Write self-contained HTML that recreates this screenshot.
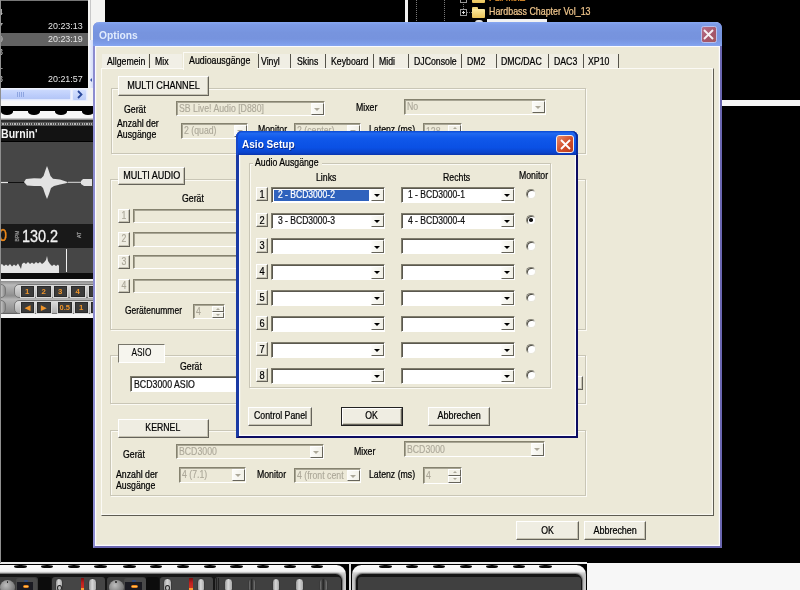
<!DOCTYPE html>
<html><head><meta charset="utf-8"><title>Options</title>
<style>
html,body{margin:0;padding:0}
html{width:800px;height:590px;overflow:hidden;background:#000}
body{width:800px;height:590px;position:relative;overflow:hidden;background:#000;font-family:"Liberation Sans",sans-serif;font-size:10.4px;color:#000}
div,span{position:absolute;box-sizing:border-box;white-space:nowrap}
.t{line-height:10px;height:10px;color:#000;-webkit-text-stroke-width:0.24px;transform:scaleX(0.84);transform-origin:0 50%}
.g{color:#aca899;-webkit-text-stroke-width:0.15px}
.btn{background:#efede2;border-top:1px solid #fff;border-left:1px solid #fff;border-right:1.4px solid #65635a;border-bottom:1.4px solid #65635a;box-shadow:inset -1px -1px 0 #c5c2b2;text-align:center}
.btn span{position:static;display:inline-block;-webkit-text-stroke-width:0.24px;transform:scaleX(0.84)}
.btn span.g{-webkit-text-stroke-width:0.15px}
.sunk{border-top:1px solid #7f7c6c;border-left:1px solid #7f7c6c;border-right:1px solid #fff;border-bottom:1px solid #fff;box-shadow:inset 1px 1px 0 #5a584e}
.sunkd{border-top:1px solid #85826f;border-left:1px solid #85826f;border-right:1px solid #fff;border-bottom:1px solid #fff;box-shadow:inset 1px 1px 0 #a8a594}
.grp{border:1px solid #c9c6b6;box-shadow:1px 1px 0 #fbfaf4, inset 1px 1px 0 #fbfaf4}
.dd{background:linear-gradient(90deg,#fbfbf8,#f1f0e7);border-top:1px solid #fff;border-left:1px solid #fdfdfb;border-right:1px solid #66645a;border-bottom:1px solid #66645a}
.dd:after{content:"";position:absolute;left:2.2px;top:4.3px;border-left:3.6px solid transparent;border-right:3.6px solid transparent;border-top:3.8px solid #000}
.ddd:after{border-top-color:#aca899}
.sep{width:1px;background:#55534a;top:54px;height:14px}
.rad{width:9.5px;height:9.5px;border-radius:50%;background:#fff;border:1px solid #8a887c;border-right-color:#e8e6da;border-bottom-color:#e8e6da;box-shadow:inset 1px 1px 0 #55534a}
</style></head><body><div style="left:0;top:0;width:800px;height:590px;overflow:hidden"><div id="w" style="left:-10px;top:-10px;width:820px;height:610px;background:#000;filter:blur(0.45px)"><div style="left:10px;top:10px;width:800px;height:590px">

<!-- background application -->
<div style="left:0;top:0;width:88px;height:88px;background:#000"></div>
<div style="left:0;top:0;width:88px;height:1px;background:#777"></div>
<div style="left:0;top:0;width:1px;height:563px;background:#8f8f8f;z-index:2"></div>
<div style="left:0;top:33px;width:88px;height:13px;background:#626262"></div>
<div class="t" style="left:-2.3px;top:7px;color:#c4c4c4;font-size:9.5px;transform:none;-webkit-text-stroke:0">4</div>
<div class="t" style="left:-2.3px;top:20.5px;color:#c4c4c4;font-size:9.5px;transform:none;-webkit-text-stroke:0">7</div>
<div class="t" style="left:47.5px;top:20.5px;color:#e4e4e4;font-size:9.7px;-webkit-text-stroke:0;transform:scaleX(0.92)">20:23:13</div>
<div class="t" style="left:-2.3px;top:34px;color:#c4c4c4;font-size:9.5px;transform:none;-webkit-text-stroke:0">9</div>
<div class="t" style="left:47.5px;top:34px;color:#e4e4e4;font-size:9.7px;-webkit-text-stroke:0;transform:scaleX(0.92)">20:23:19</div>
<div class="t" style="left:-2.3px;top:47px;color:#c4c4c4;font-size:9.5px;transform:none;-webkit-text-stroke:0">3</div>
<div class="t" style="left:-2.3px;top:60.5px;color:#c4c4c4;font-size:9.5px;transform:none;-webkit-text-stroke:0">1</div>
<div class="t" style="left:-2.3px;top:74px;color:#c4c4c4;font-size:9.5px;transform:none;-webkit-text-stroke:0">3</div>
<div class="t" style="left:47.5px;top:74px;color:#e4e4e4;font-size:9.7px;-webkit-text-stroke:0;transform:scaleX(0.92)">20:21:57</div>
<div style="left:88px;top:0;width:17px;height:30px;background:#f4f4f2"></div>
<div style="left:88px;top:0;width:6px;height:121px;background:#f4f4f2"></div>
<div style="left:90px;top:0;width:1px;height:88px;background:#c8c8c8"></div>
<div style="left:88.5px;top:40px;width:5px;height:48px;background:linear-gradient(90deg,#f0f2fb,#cdd8f8)"></div>
<div style="left:90.3px;top:77.5px;width:0;height:0;border-top:2px solid transparent;border-bottom:2px solid transparent;border-right:2.4px solid #3a55a8"></div>
<div style="left:0;top:88px;width:88px;height:13px;background:#eef1fb"></div>
<div style="left:0;top:89px;width:71px;height:11px;background:linear-gradient(#cbd9fd,#bccdfb 60%,#b4c6f6);border-radius:0 2px 2px 0;border:1px solid #dfe7fd;border-left:0"></div>
<div style="left:17px;top:92px;width:1px;height:5px;background:#8ea5e0"></div>
<div style="left:19px;top:92px;width:1px;height:5px;background:#8ea5e0"></div>
<div style="left:21px;top:92px;width:1px;height:5px;background:#8ea5e0"></div>
<div style="left:23px;top:92px;width:1px;height:5px;background:#8ea5e0"></div>
<div style="left:72px;top:89px;width:15px;height:12px;background:linear-gradient(#d4e0fe,#bccdf8);border-radius:2px;border:1px solid #e6ecfd"></div>
<svg style="position:absolute;left:76px;top:90px" width="8" height="9" viewBox="0 0 8 9"><path d="M2 1 L5.5 4.5 L2 8" fill="none" stroke="#2b4a9c" stroke-width="1.8"/></svg>
<div style="left:0;top:101px;width:93px;height:19px;background:#f6f6f6"></div>
<div style="left:0;top:106px;width:93px;height:5.2px;background:#000"></div>
<div style="left:1.2000000000000002px;top:108.2px;width:11.6px;height:6.4px;background:#000;border-radius:50%"></div>
<div style="left:28.2px;top:108.2px;width:11.6px;height:6.4px;background:#000;border-radius:50%"></div>
<div style="left:55.2px;top:108.2px;width:11.6px;height:6.4px;background:#000;border-radius:50%"></div>
<div style="left:82.2px;top:108.2px;width:11.6px;height:6.4px;background:#000;border-radius:50%"></div>
<div style="left:0;top:117.5px;width:93px;height:2.5px;background:linear-gradient(#e4e4e4,#777)"></div>
<div style="left:0;top:120px;width:93px;height:162px;background:#464646"></div>
<div style="left:0;top:119.6px;width:93px;height:2.4px;background:#2c2c2c"></div>
<div style="left:0;top:122px;width:93px;height:4px;background:#555"></div>
<div style="left:0;top:122.6px;width:93px;height:2.8px;background:repeating-linear-gradient(90deg,#b4b4b4 0 1.2px,#505050 1.2px 2.4px)"></div>
<div style="left:0;top:126px;width:93px;height:16px;background:#131313"></div>
<div class="t" style="left:0.5px;top:128px;line-height:13px;height:13px;color:#f4f4f4;font-weight:bold;font-size:12px;transform:scaleX(0.88);transform-origin:0 0;-webkit-text-stroke:0">Burnin'</div>
<div style="left:0;top:141px;width:93px;height:1px;background:#000"></div>
<svg style="position:absolute;left:0;top:160px" width="93" height="46" viewBox="0 160 93 46">
<path d="M0 182.5 H24" stroke="#111" stroke-width="1"/>
<path d="M0 182.5 H8" stroke="#e6e6e6" stroke-width="1.2"/>
<path d="M24 182 L26 179 L34 178.3 L41 178.5 L43.5 176 L45.5 170 L47 166 L48.5 170 L50.5 176 L53 178.8 L60 179.5 L66 181.5 L68 182.3 L66 183.2 L60 184.5 L54 186 L51 188 L49 194 L47 199 L45 194 L43 188 L41 186 L34 186 L27 185.5 Z" fill="#e2e2e2"/>
<path d="M68 182.3 H81" stroke="#dcdcdc" stroke-width="1"/>
<path d="M81 181 L83 179 L92 179 L92 186 L84 186 L81 184 Z" fill="#e2e2e2"/>
</svg>
<div style="left:0;top:224px;width:93px;height:24px;background:#191919"></div>
<div class="t" style="left:-1.5px;top:226px;line-height:20px;height:20px;color:#f08a1a;font-size:17px;-webkit-text-stroke:0.4px #f08a1a">0</div>
<div class="t" style="left:21.5px;top:226px;line-height:20px;height:20px;color:#f2f2f2;font-size:17.2px;letter-spacing:0;-webkit-text-stroke:0.3px #f2f2f2">130.2</div>
<div class="t" style="left:10px;top:231px;font-size:5px;color:#999;transform:rotate(-90deg);transform-origin:center;width:14px;text-align:center">BPM</div>
<div class="t" style="left:72px;top:230px;font-size:5px;color:#999;transform:rotate(-90deg);transform-origin:center;width:14px;text-align:center">AT</div>
<svg style="position:absolute;left:0;top:248px" width="93" height="26" viewBox="0 248 93 26">
<path d="M0 273 V265 L2 264 L4 266 L6 264.5 L8 266 L10 264 L12 266.5 L14 264.5 L16 266 L18 263.5 L20 267 L21 269 L22 264 L24 262.5 L26 264 L28 262 L30 264 L32 262.5 L34 264 L36 262 L38 263.5 L40 262 L42 264 L44 262.5 L46 260 L47 256 L48 261 L50 264 L52 266 L54 264.5 L56 266 L58 264.5 L59 266 V273 Z" fill="#e4e4e4"/>
<path d="M66.5 249 V272" stroke="#f0f0f0" stroke-width="1"/>
</svg>
<div style="left:0;top:273px;width:93px;height:6px;background:#0c0c0c"></div>
<div style="left:0;top:279px;width:93px;height:2px;background:#f0f0f0"></div>
<div style="left:0;top:281px;width:93px;height:33px;background:linear-gradient(#8d8d8d,#b9b9b9 12%,#8e8e8e 45%,#b5b5b5 55%,#8a8a8a 95%,#555)"></div>
<div style="left:-6px;top:283.5px;width:12px;height:14px;background:linear-gradient(90deg,#e9e9e9,#c0c0c0 60%,#8a8a8a);border-radius:5px;border:1px solid #777"></div>
<div style="left:-6px;top:299.5px;width:12px;height:14px;background:linear-gradient(90deg,#e9e9e9,#c0c0c0 60%,#8a8a8a);border-radius:5px;border:1px solid #777"></div>
<div style="left:14px;top:283.5px;width:82px;height:14px;background:linear-gradient(#dedede,#b0b0b0);border-radius:5px 0 0 5px;border:1px solid #777"></div>
<div style="left:14px;top:299.5px;width:82px;height:14px;background:linear-gradient(#dedede,#b0b0b0);border-radius:5px 0 0 5px;border:1px solid #777"></div>
<div style="left:20.5px;top:285.5px;width:13.5px;height:11px;background:#3b3b3b;border:1px solid #2a2a2a;box-shadow:0 0 0 1px #d8d8d8;color:#f0952a;font-weight:bold;font-size:7.8px;line-height:9px;text-align:center">1</div>
<div style="left:37px;top:285.5px;width:13.5px;height:11px;background:#3b3b3b;border:1px solid #2a2a2a;box-shadow:0 0 0 1px #d8d8d8;color:#f0952a;font-weight:bold;font-size:7.8px;line-height:9px;text-align:center">2</div>
<div style="left:53.5px;top:285.5px;width:13.5px;height:11px;background:#3b3b3b;border:1px solid #2a2a2a;box-shadow:0 0 0 1px #d8d8d8;color:#f0952a;font-weight:bold;font-size:7.8px;line-height:9px;text-align:center">3</div>
<div style="left:71px;top:285.5px;width:13.5px;height:11px;background:#3b3b3b;border:1px solid #2a2a2a;box-shadow:0 0 0 1px #d8d8d8;color:#f0952a;font-weight:bold;font-size:7.8px;line-height:9px;text-align:center">4</div>
<div style="left:88.5px;top:285.5px;width:8px;height:11px;background:#3b3b3b;border:1px solid #2a2a2a;box-shadow:0 0 0 1px #d8d8d8;color:#f0952a;font-weight:bold;font-size:7.8px;line-height:9px;text-align:center"></div>
<div style="left:20.5px;top:301.5px;width:13.5px;height:11px;background:#3b3b3b;border:1px solid #2a2a2a;box-shadow:0 0 0 1px #d8d8d8;color:#f0952a;font-weight:bold;font-size:6.5px;line-height:9px;text-align:center">&#9664;</div>
<div style="left:37px;top:301.5px;width:13.5px;height:11px;background:#3b3b3b;border:1px solid #2a2a2a;box-shadow:0 0 0 1px #d8d8d8;color:#f0952a;font-weight:bold;font-size:6.5px;line-height:9px;text-align:center">&#9654;</div>
<div style="left:58px;top:301.5px;width:13.5px;height:11px;background:#3b3b3b;border:1px solid #2a2a2a;box-shadow:0 0 0 1px #d8d8d8;color:#f0952a;font-weight:bold;font-size:7.5px;line-height:9px;text-align:center">0.5</div>
<div style="left:74.5px;top:301.5px;width:13.5px;height:11px;background:#3b3b3b;border:1px solid #2a2a2a;box-shadow:0 0 0 1px #d8d8d8;color:#f0952a;font-weight:bold;font-size:7.8px;line-height:9px;text-align:center">1</div>
<div style="left:90.5px;top:301.5px;width:6px;height:11px;background:#3b3b3b;border:1px solid #2a2a2a;box-shadow:0 0 0 1px #d8d8d8;color:#f0952a;font-weight:bold;font-size:7.8px;line-height:9px;text-align:center"></div>
<div style="left:0;top:314px;width:93px;height:4px;background:#f4f4f4"></div>
<div style="left:405px;top:0;width:3px;height:23px;background:#f2f2f2"></div>
<div style="left:416px;top:0;width:1px;height:23px;background:repeating-linear-gradient(#777 0 1px,#000 1px 2px)"></div>
<div style="left:444px;top:0;width:1px;height:23px;background:repeating-linear-gradient(#777 0 1px,#000 1px 2px)"></div>
<div style="left:463px;top:0;width:1px;height:12px;background:repeating-linear-gradient(#777 0 1px,#000 1px 2px)"></div>
<div style="left:460px;top:9px;width:7px;height:7px;border:1px solid #999;background:#000"></div>
<div style="left:462px;top:12px;width:3px;height:1px;background:#ddd"></div><div style="left:463px;top:11px;width:1px;height:3px;background:#ddd"></div>
<div style="left:460px;top:-4px;width:7px;height:7px;border:1px solid #999;background:#000"></div>
<div style="left:467px;top:12px;width:5px;height:1px;background:repeating-linear-gradient(90deg,#777 0 1px,#000 1px 2px)"></div>
<div style="left:472px;top:7px;width:6px;height:3px;background:#f3d77a;border-radius:1px 1px 0 0"></div>
<div style="left:472px;top:9px;width:13px;height:9px;background:linear-gradient(#fbe9a0,#e9c257);border-radius:1px"></div>
<div style="left:472px;top:-6px;width:13px;height:9px;background:linear-gradient(#fbe9a0,#e9c257);border-radius:1px"></div>
<div class="t" style="left:489.3px;top:6px;color:#f0c68c;font-size:10.2px;line-height:11px;height:11px;transform:scaleX(0.87)">Hardbass Chapter Vol_13</div>
<div class="t" style="left:489.3px;top:-8.3px;color:#f09a30;font-size:10.2px;line-height:11px;height:11px;transform:scaleX(0.87)">Full MixE</div>
<div style="left:475px;top:20px;width:8px;height:3px;background:#ddd;border-radius:3px 3px 0 0"></div>
<div style="left:487px;top:19px;width:60px;height:4px;background:#f2f2f2"></div>
<div style="left:721px;top:100px;width:79px;height:6px;background:#f6f6f6"></div>
<!-- bottom strip -->
<div style="left:0;top:562px;width:587px;height:2px;background:#ececec"></div>
<div style="left:586.8px;top:563.2px;width:214px;height:28px;background:#f7f7f7"></div>
<div style="left:-10px;top:565.2px;width:356px;height:30px;background:linear-gradient(#fcfcfc,#f4f4f4 6.3px,#d4d4d4 8px,#c4c4c4 10px,#d0d0d0);border-radius:0px 9.5px 0 0"></div>
<div style="left:-6.4px;top:574px;width:348.8px;height:30px;background:#161616;border-radius:0px 6.5px 0 0;box-shadow:0 0 1.5px 0.5px #666"></div>
<div style="left:352px;top:565.2px;width:233.8px;height:30px;background:linear-gradient(#fcfcfc,#f4f4f4 6.3px,#d4d4d4 8px,#c4c4c4 10px,#d0d0d0);border-radius:9.5px 9.5px 0 0"></div>
<div style="left:355.6px;top:574px;width:226.60000000000002px;height:30px;background:#161616;border-radius:6.5px 6.5px 0 0;box-shadow:0 0 1.5px 0.5px #666"></div>
<div style="left:349.2px;top:563px;width:1.7px;height:27px;background:#dcdcdc"></div>
<div style="left:14.3px;top:564.9px;width:12.4px;height:3.4px;background:#0a0a0a;border-radius:50%"></div>
<div style="left:40.8px;top:564.9px;width:12.4px;height:3.4px;background:#0a0a0a;border-radius:50%"></div>
<div style="left:67.5px;top:564.9px;width:12.4px;height:3.4px;background:#0a0a0a;border-radius:50%"></div>
<div style="left:94.3px;top:564.9px;width:12.4px;height:3.4px;background:#0a0a0a;border-radius:50%"></div>
<div style="left:123.3px;top:564.9px;width:12.4px;height:3.4px;background:#0a0a0a;border-radius:50%"></div>
<div style="left:150.1px;top:564.9px;width:12.4px;height:3.4px;background:#0a0a0a;border-radius:50%"></div>
<div style="left:176.8px;top:564.9px;width:12.4px;height:3.4px;background:#0a0a0a;border-radius:50%"></div>
<div style="left:203.8px;top:564.9px;width:12.4px;height:3.4px;background:#0a0a0a;border-radius:50%"></div>
<div style="left:230.2px;top:564.9px;width:12.4px;height:3.4px;background:#0a0a0a;border-radius:50%"></div>
<div style="left:256.8px;top:564.9px;width:12.4px;height:3.4px;background:#0a0a0a;border-radius:50%"></div>
<div style="left:283.8px;top:564.9px;width:12.4px;height:3.4px;background:#0a0a0a;border-radius:50%"></div>
<div style="left:310.6px;top:564.9px;width:12.4px;height:3.4px;background:#0a0a0a;border-radius:50%"></div>
<div style="left:379.3px;top:564.9px;width:12.4px;height:3.4px;background:#0a0a0a;border-radius:50%"></div>
<div style="left:406.1px;top:564.9px;width:12.4px;height:3.4px;background:#0a0a0a;border-radius:50%"></div>
<div style="left:432.8px;top:564.9px;width:12.4px;height:3.4px;background:#0a0a0a;border-radius:50%"></div>
<div style="left:459.6px;top:564.9px;width:12.4px;height:3.4px;background:#0a0a0a;border-radius:50%"></div>
<div style="left:486.1px;top:564.9px;width:12.4px;height:3.4px;background:#0a0a0a;border-radius:50%"></div>
<div style="left:512.8px;top:564.9px;width:12.4px;height:3.4px;background:#0a0a0a;border-radius:50%"></div>
<div style="left:539.3px;top:564.9px;width:12.4px;height:3.4px;background:#0a0a0a;border-radius:50%"></div>
<div style="left:-3px;top:576.8px;width:40.5px;height:15px;background:#3d3d3d;border-radius:3px 3px 0 0"></div>
<div style="left:37.5px;top:576.8px;width:13.5px;height:15px;background:#0c0c0c;border-radius:3px 3px 0 0"></div>
<div style="left:51.5px;top:576.8px;width:53px;height:15px;background:#454545;border-radius:3px 3px 0 0"></div>
<div style="left:106.5px;top:576.8px;width:39px;height:15px;background:#3d3d3d;border-radius:3px 3px 0 0"></div>
<div style="left:145.5px;top:576.8px;width:13.5px;height:15px;background:#0c0c0c;border-radius:3px 3px 0 0"></div>
<div style="left:159.5px;top:576.8px;width:53px;height:15px;background:#454545;border-radius:3px 3px 0 0"></div>
<div style="left:214.5px;top:576.8px;width:126px;height:15px;background:#404040;border-radius:3px 3px 0 0"></div>
<div style="left:357.5px;top:576.8px;width:223px;height:15px;background:#404040;border-radius:3px 3px 0 0"></div>
<div style="left:0.0px;top:579.5px;width:15px;height:15px;border-radius:50%;background:radial-gradient(circle at 40% 35%,#bdbdbd,#7a7a7a 65%,#444)"></div>
<div style="left:6.7px;top:581px;width:1.8px;height:2.4px;background:#222;border-radius:1px"></div>
<div style="left:15.7px;top:578px;width:21.5px;height:13px;background:#4a4a4a;border-radius:3px 3px 0 0"></div>
<div style="left:16.5px;top:582px;width:16.5px;height:9px;background:#1b1b22"></div>
<div style="left:23.5px;top:579.5px;width:4px;height:2px;background:#2f4a80;border-radius:1px"></div>
<div style="left:22.5px;top:584.5px;width:6.5px;height:3.6px;background:#ffc050;border:1px solid #f08018;border-radius:1.5px"></div>
<div style="left:54.8px;top:577.5px;width:8.4px;height:15px;border-radius:4.2px;background:linear-gradient(90deg,#999,#d8d8d8 45%,#aaa);border:1px solid #3a3a3a"></div>
<div style="left:56.5px;top:585px;width:5px;height:6px;border-radius:50%;border:1px solid #222;background:#bbb"></div>
<div style="left:80.5px;top:577.5px;width:3.5px;height:10px;background:linear-gradient(#7a1010,#c02020 50%,#d03020)"></div>
<div style="left:80.5px;top:587.5px;width:3.5px;height:3px;background:#ff9a30"></div>
<div style="left:88.3px;top:577.5px;width:8.4px;height:15px;border-radius:4.2px;background:linear-gradient(90deg,#999,#d8d8d8 45%,#aaa);border:1px solid #3a3a3a"></div>
<div style="left:108.5px;top:579.5px;width:15px;height:15px;border-radius:50%;background:radial-gradient(circle at 40% 35%,#bdbdbd,#7a7a7a 65%,#444)"></div>
<div style="left:115.2px;top:581px;width:1.8px;height:2.4px;background:#222;border-radius:1px"></div>
<div style="left:124.2px;top:578px;width:21.5px;height:13px;background:#4a4a4a;border-radius:3px 3px 0 0"></div>
<div style="left:125.0px;top:582px;width:16.5px;height:9px;background:#1b1b22"></div>
<div style="left:132.0px;top:579.5px;width:4px;height:2px;background:#2f4a80;border-radius:1px"></div>
<div style="left:131.0px;top:584.5px;width:6.5px;height:3.6px;background:#ffc050;border:1px solid #f08018;border-radius:1.5px"></div>
<div style="left:163.3px;top:577.5px;width:8.4px;height:15px;border-radius:4.2px;background:linear-gradient(90deg,#999,#d8d8d8 45%,#aaa);border:1px solid #3a3a3a"></div>
<div style="left:165.0px;top:585px;width:5px;height:6px;border-radius:50%;border:1px solid #222;background:#bbb"></div>
<div style="left:189.0px;top:577.5px;width:3.5px;height:10px;background:linear-gradient(#7a1010,#c02020 50%,#d03020)"></div>
<div style="left:189.0px;top:587.5px;width:3.5px;height:3px;background:#ff9a30"></div>
<div style="left:196.8px;top:577.5px;width:8.4px;height:15px;border-radius:4.2px;background:linear-gradient(90deg,#999,#d8d8d8 45%,#aaa);border:1px solid #3a3a3a"></div>
<div style="left:215.5px;top:578px;width:1px;height:12px;background:#222"></div><div style="left:217.5px;top:578px;width:1px;height:12px;background:#222"></div>
<div style="left:224.3px;top:577.5px;width:8.4px;height:15px;border-radius:4.2px;background:linear-gradient(90deg,#999,#d8d8d8 45%,#aaa);border:1px solid #3a3a3a"></div>
<div style="left:247.8px;top:577.5px;width:8.4px;height:15px;border-radius:4.2px;background:linear-gradient(90deg,#777,#222 45%,#777);border:1px solid #3a3a3a"></div>
<div style="left:271.8px;top:577.5px;width:8.4px;height:15px;border-radius:4.2px;background:linear-gradient(90deg,#999,#d8d8d8 45%,#aaa);border:1px solid #3a3a3a"></div>
<div style="left:295.3px;top:577.5px;width:8.4px;height:15px;border-radius:4.2px;background:linear-gradient(90deg,#999,#d8d8d8 45%,#aaa);border:1px solid #3a3a3a"></div>
<div style="left:319.3px;top:577.5px;width:8.4px;height:15px;border-radius:4.2px;background:linear-gradient(90deg,#777,#222 45%,#777);border:1px solid #3a3a3a"></div>
<!-- Options window -->
<div style="left:92.5px;top:22px;width:629.3px;height:526px;background:#ece9d8;border-radius:6px 6px 0 0;border:2.4px solid #6a66b0;border-left-color:#8c8cd0;border-top:0;box-shadow:inset 0 0 0 1.2px #fbfbff;overflow:hidden">
</div>
<div style="left:92.5px;top:22px;width:629.3px;height:23.5px;background:linear-gradient(#88a8f2,#7c9ae6 12%,#7794de 45%,#7693de 70%,#7e9dea 90%,#86a6f0);border-radius:6px 6px 0 0"></div>
<div style="left:95px;top:45.5px;width:624.5px;height:1.2px;background:#fbfbff"></div>
<div class="t" style="left:98.5px;top:28.2px;line-height:13px;height:13px;color:#e0ebfd;font-weight:bold;font-size:11.6px;transform:scaleX(0.885);transform-origin:0 0;-webkit-text-stroke:0">Options</div>
<div style="left:700.5px;top:26px;width:16.5px;height:16.5px;background:linear-gradient(135deg,#b8708a,#a5566a 60%,#a35a60);border:1px solid #b9c0ee;border-radius:2.5px"></div>
<svg style="position:absolute;left:703.2px;top:28.8px" width="11" height="11" viewBox="0 0 11 11"><path d="M1 1 L10 10 M10 1 L1 10" stroke="#f6f0f4" stroke-width="1.9"/></svg>
<div style="left:101px;top:68px;width:613px;height:448px;border-left:1px solid #fbfaf5;border-top:1px solid #fbfaf5;border-right:1.3px solid #5e5c52;border-bottom:1.3px solid #5e5c52;box-shadow:inset -1.2px -1.2px 0 #f8f7ef"></div>
<div style="left:102px;top:54px;width:46px;height:14px;background:#f1efe6"></div>
<div style="left:150px;top:54px;width:32px;height:14px;background:#f1efe6"></div>
<div style="left:259px;top:54px;width:359px;height:14px;background:#f0eee4"></div>
<div class="t" style="left:106.5px;top:56.5px">Allgemein</div>
<div class="t" style="left:154.5px;top:56.5px">Mix</div>
<div class="t" style="left:261px;top:56.5px">Vinyl</div>
<div class="t" style="left:297px;top:56.5px">Skins</div>
<div class="t" style="left:331px;top:56.5px">Keyboard</div>
<div class="t" style="left:379px;top:56.5px">Midi</div>
<div class="t" style="left:414px;top:56.5px">DJConsole</div>
<div class="t" style="left:467px;top:56.5px">DM2</div>
<div class="t" style="left:501px;top:56.5px">DMC/DAC</div>
<div class="t" style="left:554px;top:56.5px">DAC3</div>
<div class="t" style="left:588px;top:56.5px">XP10</div>
<div class="t" style="left:189px;top:55px;font-size:10.5px">Audioausg&auml;nge</div>
<div class="sep" style="left:148.5px"></div>
<div class="sep" style="left:257.5px"></div>
<div class="sep" style="left:290px"></div>
<div class="sep" style="left:325px"></div>
<div class="sep" style="left:373px"></div>
<div class="sep" style="left:408px"></div>
<div class="sep" style="left:460.5px"></div>
<div class="sep" style="left:495.5px"></div>
<div class="sep" style="left:548px"></div>
<div class="sep" style="left:583px"></div>
<div class="sep" style="left:618px"></div>
<div style="left:183px;top:52px;width:74px;height:18px;border-top:1px solid #fbfaf5;border-left:1px solid #fbfaf5;background:#ece9d8"></div>
<div class="t" style="left:189px;top:55px;font-size:10.5px">Audioausg&auml;nge</div>
<div class="grp" style="left:110.5px;top:87.5px;width:475.5px;height:66.0px"></div>
<div class="btn " style="left:118px;top:76px;width:90.5px;height:19.5px;line-height:17.5px;"><span class="" style="transform:scaleX(0.875)">MULTI CHANNEL</span></div>
<div class="t" style="left:123.5px;top:105px">Ger&auml;t</div>
<div class="t" style="left:117px;top:118.5px">Anzahl der</div>
<div class="t" style="left:117px;top:129.6px">Ausg&auml;nge</div>
<div class="sunkd" style="left:176px;top:100.5px;width:148.5px;height:15.5px;background:#ece9d8"></div>
<div class="t g" style="left:179.2px;top:103.75px;color:#aca899">SB Live! Audio [D880]</div>
<div class="dd ddd" style="left:310.5px;top:102.5px;width:13px;height:12.0px"></div>
<div class="sunkd" style="left:180.5px;top:123px;width:67.0px;height:15.5px;background:#ece9d8"></div>
<div class="t g" style="left:183.7px;top:126.25px;color:#aca899">2 (quad)</div>
<div class="dd ddd" style="left:233.5px;top:125px;width:13px;height:12.0px"></div>
<div class="t" style="left:258px;top:125px">Monitor</div>
<div class="sunkd" style="left:294px;top:123px;width:67px;height:15.5px;background:#ece9d8"></div>
<div class="t g" style="left:297.2px;top:126.25px;color:#aca899">2 (center)</div>
<div class="dd ddd" style="left:347px;top:125px;width:13px;height:12.0px"></div>
<div class="t" style="left:355.5px;top:103px">Mixer</div>
<div class="sunkd" style="left:404px;top:99px;width:142px;height:15.5px;background:#ece9d8"></div>
<div class="t g" style="left:407.2px;top:102.25px;color:#aca899">No</div>
<div class="dd ddd" style="left:532px;top:101px;width:13px;height:12.0px"></div>
<div class="t" style="left:369px;top:125px">Latenz (ms)</div>
<div class="sunkd" style="left:423px;top:122.7px;width:38.5px;height:17.299999999999997px;background:#ece9d8"></div>
<div class="t g" style="left:426.2px;top:126.85px;color:#aca899">128</div>
<div style="left:448.0px;top:124.7px;width:12.5px;height:7.149999999999999px;background:#f1f0e7;border-top:1px solid #fff;border-left:1px solid #fff;border-right:1px solid #66645a;border-bottom:1px solid #66645a"></div>
<div style="left:452.5px;top:127.075px;width:0;height:0;border-left:2px solid transparent;border-right:2px solid transparent;border-bottom:2px solid #aca899"></div>
<div style="left:448.0px;top:131.85px;width:12.5px;height:7.149999999999999px;background:#f1f0e7;border-top:1px solid #fff;border-left:1px solid #fff;border-right:1px solid #66645a;border-bottom:1px solid #66645a"></div>
<div style="left:452.5px;top:134.42499999999998px;width:0;height:0;border-left:2px solid transparent;border-right:2px solid transparent;border-top:2px solid #aca899"></div>
<div class="grp" style="left:110px;top:179px;width:476px;height:150.5px"></div>
<div class="btn " style="left:117.5px;top:166.6px;width:67.5px;height:18.200000000000017px;line-height:16.200000000000017px;"><span class="" style="transform:scaleX(0.87)">MULTI AUDIO</span></div>
<div class="t" style="left:182px;top:194px">Ger&auml;t</div>
<div class="btn dis" style="left:117.5px;top:208.8px;width:12.5px;height:14.699999999999989px;line-height:12.699999999999989px;"><span class="g" style="">1</span></div>
<div class="sunkd" style="left:132.5px;top:208.8px;width:190.5px;height:14.699999999999989px;background:#ece9d8"></div>
<div class="btn dis" style="left:117.5px;top:232px;width:12.5px;height:14.699999999999989px;line-height:12.699999999999989px;"><span class="g" style="">2</span></div>
<div class="sunkd" style="left:132.5px;top:232px;width:190.5px;height:14.699999999999989px;background:#ece9d8"></div>
<div class="btn dis" style="left:117.5px;top:254.5px;width:12.5px;height:14.699999999999989px;line-height:12.699999999999989px;"><span class="g" style="">3</span></div>
<div class="sunkd" style="left:132.5px;top:254.5px;width:190.5px;height:14.699999999999989px;background:#ece9d8"></div>
<div class="btn dis" style="left:117.5px;top:278.8px;width:12.5px;height:14.699999999999989px;line-height:12.699999999999989px;"><span class="g" style="">4</span></div>
<div class="sunkd" style="left:132.5px;top:278.8px;width:190.5px;height:14.699999999999989px;background:#ece9d8"></div>
<div class="t" style="left:125.3px;top:305.7px;transform:scaleX(0.815)">Ger&auml;tenummer</div>
<div class="sunkd" style="left:193px;top:304px;width:32px;height:15.199999999999989px;background:#ece9d8"></div>
<div class="t g" style="left:196.2px;top:307.1px;color:#aca899">4</div>
<div style="left:211.5px;top:306.0px;width:12.5px;height:6.099999999999994px;background:#f1f0e7;border-top:1px solid #fff;border-left:1px solid #fff;border-right:1px solid #66645a;border-bottom:1px solid #66645a"></div>
<div style="left:216px;top:307.85px;width:0;height:0;border-left:2px solid transparent;border-right:2px solid transparent;border-bottom:2px solid #aca899"></div>
<div style="left:211.5px;top:312.1px;width:12.5px;height:6.099999999999994px;background:#f1f0e7;border-top:1px solid #fff;border-left:1px solid #fff;border-right:1px solid #66645a;border-bottom:1px solid #66645a"></div>
<div style="left:216px;top:314.15000000000003px;width:0;height:0;border-left:2px solid transparent;border-right:2px solid transparent;border-top:2px solid #aca899"></div>
<div class="grp" style="left:110px;top:355.2px;width:476px;height:48.80000000000001px"></div>
<div style="left:117.8px;top:344.2px;width:47px;height:18.5px;background:#f6f5ee;border-top:1px solid #77756a;border-left:1px solid #77756a;border-right:1px solid #fff;border-bottom:1px solid #fff;text-align:center;line-height:16.5px"><span style="position:static;display:inline-block;transform:scaleX(0.8);-webkit-text-stroke-width:0.12px">ASIO</span></div>
<div class="t" style="left:180px;top:362px">Ger&auml;t</div>
<div class="sunk" style="left:130px;top:376.4px;width:430px;height:15.200000000000045px;background:#fff"></div>
<div class="t" style="left:134.2px;top:379.5px;color:#111;transform:scaleX(0.844)">BCD3000 ASIO</div>
<div class="btn" style="left:577px;top:376px;width:6px;height:14px"></div>
<div class="grp" style="left:110px;top:430px;width:476px;height:66px"></div>
<div class="btn " style="left:117.5px;top:419px;width:91.5px;height:18.5px;line-height:16.5px;"><span class="" style="">KERNEL</span></div>
<div class="t" style="left:122.5px;top:450px">Ger&auml;t</div>
<div class="sunkd" style="left:175.5px;top:444px;width:148.0px;height:15px;background:#ece9d8"></div>
<div class="t g" style="left:178.7px;top:447.0px;color:#aca899">BCD3000</div>
<div class="dd ddd" style="left:309.5px;top:446px;width:13px;height:11.5px"></div>
<div class="t" style="left:353.5px;top:446.5px">Mixer</div>
<div class="sunkd" style="left:403.5px;top:441px;width:141.5px;height:16px;background:#ece9d8"></div>
<div class="t g" style="left:406.7px;top:444.5px;color:#aca899">BCD3000</div>
<div class="dd ddd" style="left:531px;top:443px;width:13px;height:12.5px"></div>
<div class="t" style="left:116px;top:469.5px">Anzahl der</div>
<div class="t" style="left:116px;top:481px">Ausg&auml;nge</div>
<div class="sunkd" style="left:179px;top:467px;width:67px;height:15.5px;background:#ece9d8"></div>
<div class="t g" style="left:182.2px;top:470.25px;color:#aca899">4 (7.1)</div>
<div class="dd ddd" style="left:232px;top:469px;width:13px;height:12.0px"></div>
<div class="t" style="left:256.5px;top:470px">Monitor</div>
<div class="sunkd" style="left:293.5px;top:467.5px;width:67.0px;height:15.0px;background:#ece9d8"></div>
<div class="t g" style="left:296.7px;top:470.5px;color:#aca899">4 (front cent</div>
<div class="dd ddd" style="left:346.5px;top:469.5px;width:13px;height:11.5px"></div>
<div class="t" style="left:369px;top:470px">Latenz (ms)</div>
<div class="sunkd" style="left:423px;top:466.7px;width:38.5px;height:17.30000000000001px;background:#ece9d8"></div>
<div class="t g" style="left:426.2px;top:470.85px;color:#aca899">4</div>
<div style="left:448.0px;top:468.7px;width:12.5px;height:7.150000000000006px;background:#f1f0e7;border-top:1px solid #fff;border-left:1px solid #fff;border-right:1px solid #66645a;border-bottom:1px solid #66645a"></div>
<div style="left:452.5px;top:471.075px;width:0;height:0;border-left:2px solid transparent;border-right:2px solid transparent;border-bottom:2px solid #aca899"></div>
<div style="left:448.0px;top:475.85px;width:12.5px;height:7.150000000000006px;background:#f1f0e7;border-top:1px solid #fff;border-left:1px solid #fff;border-right:1px solid #66645a;border-bottom:1px solid #66645a"></div>
<div style="left:452.5px;top:478.425px;width:0;height:0;border-left:2px solid transparent;border-right:2px solid transparent;border-top:2px solid #aca899"></div>
<div class="btn " style="left:516px;top:520.5px;width:62.5px;height:19.0px;line-height:17.0px;"><span class="" style="">OK</span></div>
<div class="btn " style="left:583.5px;top:520.5px;width:62.5px;height:19.0px;line-height:17.0px;"><span class="" style="transform:scaleX(0.865)">Abbrechen</span></div>
<!-- Asio Setup window -->
<div style="left:236px;top:131px;width:342px;height:307px;background:#ece9d8;border-radius:6px 6px 0 0;border:2.4px solid #0c0c62;border-left:3px solid #1a3aa4;border-top:0;box-shadow:inset 0 0 0 1.2px #fbfbff"></div>
<div style="left:236px;top:131px;width:342px;height:24px;background:linear-gradient(#0a48d0,#2169f0 10%,#1058ea 30%,#0a50e4 70%,#0a44cc 90%,#0a34ac);border-radius:6px 6px 0 0;box-shadow:inset -2px 0 0 #0c2c9c, inset 2px 0 0 #1848c8"></div>
<div class="t" style="left:242px;top:138px;line-height:13px;height:13px;color:#fff;font-weight:bold;font-size:11.2px;transform:scaleX(0.9);transform-origin:0 0;-webkit-text-stroke:0;text-shadow:1px 1px 0 #0a2a8a">Asio Setup</div>
<div style="left:556.2px;top:135.2px;width:17.7px;height:17.7px;background:linear-gradient(135deg,#e88a68,#d24e2a 55%,#b83a1c);border:1.2px solid #f6ece8;border-radius:3px"></div>
<svg style="position:absolute;left:559.5px;top:138.5px" width="11" height="11" viewBox="0 0 11 11"><path d="M1 1 L10 10 M10 1 L1 10" stroke="#fff" stroke-width="1.9"/></svg>
<div class="grp" style="left:248.5px;top:162.5px;width:302.0px;height:225.0px"></div>
<div style="left:253px;top:158px;width:69px;height:11px;background:#ece9d8"></div>
<div class="t" style="left:255px;top:158px">Audio Ausg&auml;nge</div>
<div class="t" style="left:316px;top:172.5px">Links</div>
<div class="t" style="left:442.5px;top:172.5px">Rechts</div>
<div class="t" style="left:518.5px;top:171px">Monitor</div>
<div class="btn " style="left:256px;top:186.7px;width:12px;height:14.5px;line-height:12.5px;"><span class="" style="font-size:11px">1</span></div>
<div class="sunk" style="left:271px;top:186.7px;width:113.5px;height:16.0px;background:#fff"></div>
<div style="left:274px;top:189.7px;width:95.0px;height:11.5px;background:#2f62bd"></div>
<div class="t" style="left:277.5px;top:190.2px;color:#fff;transform:scaleX(0.822)">2 - BCD3000-2</div>
<div class="dd " style="left:370.5px;top:188.7px;width:13px;height:12.5px"></div>
<div class="sunk" style="left:401px;top:186.7px;width:114px;height:16.0px;background:#fff"></div>
<div class="t" style="left:407.5px;top:190.2px;color:#111;transform:scaleX(0.822)">1 - BCD3000-1</div>
<div class="dd " style="left:501px;top:188.7px;width:13px;height:12.5px"></div>
<div class="rad" style="left:526.3px;top:189.39999999999998px"></div>
<div class="btn " style="left:256px;top:212.52999999999997px;width:12px;height:14.5px;line-height:12.5px;"><span class="" style="font-size:11px">2</span></div>
<div class="sunk" style="left:271px;top:212.52999999999997px;width:113.5px;height:16.0px;background:#fff"></div>
<div class="t" style="left:277.5px;top:216.02999999999997px;color:#111;transform:scaleX(0.822)">3 - BCD3000-3</div>
<div class="dd " style="left:370.5px;top:214.52999999999997px;width:13px;height:12.5px"></div>
<div class="sunk" style="left:401px;top:212.52999999999997px;width:114px;height:16.0px;background:#fff"></div>
<div class="t" style="left:407.5px;top:216.02999999999997px;color:#111;transform:scaleX(0.822)">4 - BCD3000-4</div>
<div class="dd " style="left:501px;top:214.52999999999997px;width:13px;height:12.5px"></div>
<div class="rad" style="left:526.3px;top:215.22999999999996px"></div>
<div style="left:529.3px;top:218.22999999999996px;width:3.6px;height:3.6px;border-radius:50%;background:#111"></div>
<div class="btn " style="left:256px;top:238.35999999999999px;width:12px;height:14.5px;line-height:12.5px;"><span class="" style="font-size:11px">3</span></div>
<div class="sunk" style="left:271px;top:238.35999999999999px;width:113.5px;height:16.0px;background:#fff"></div>
<div class="dd " style="left:370.5px;top:240.35999999999999px;width:13px;height:12.5px"></div>
<div class="sunk" style="left:401px;top:238.35999999999999px;width:114px;height:16.0px;background:#fff"></div>
<div class="dd " style="left:501px;top:240.35999999999999px;width:13px;height:12.5px"></div>
<div class="rad" style="left:526.3px;top:241.05999999999997px"></div>
<div class="btn " style="left:256px;top:264.19px;width:12px;height:14.5px;line-height:12.5px;"><span class="" style="font-size:11px">4</span></div>
<div class="sunk" style="left:271px;top:264.19px;width:113.5px;height:16.0px;background:#fff"></div>
<div class="dd " style="left:370.5px;top:266.19px;width:13px;height:12.5px"></div>
<div class="sunk" style="left:401px;top:264.19px;width:114px;height:16.0px;background:#fff"></div>
<div class="dd " style="left:501px;top:266.19px;width:13px;height:12.5px"></div>
<div class="rad" style="left:526.3px;top:266.89px"></div>
<div class="btn " style="left:256px;top:290.02px;width:12px;height:14.5px;line-height:12.5px;"><span class="" style="font-size:11px">5</span></div>
<div class="sunk" style="left:271px;top:290.02px;width:113.5px;height:16.0px;background:#fff"></div>
<div class="dd " style="left:370.5px;top:292.02px;width:13px;height:12.5px"></div>
<div class="sunk" style="left:401px;top:290.02px;width:114px;height:16.0px;background:#fff"></div>
<div class="dd " style="left:501px;top:292.02px;width:13px;height:12.5px"></div>
<div class="rad" style="left:526.3px;top:292.71999999999997px"></div>
<div class="btn " style="left:256px;top:315.84999999999997px;width:12px;height:14.5px;line-height:12.5px;"><span class="" style="font-size:11px">6</span></div>
<div class="sunk" style="left:271px;top:315.84999999999997px;width:113.5px;height:16.0px;background:#fff"></div>
<div class="dd " style="left:370.5px;top:317.84999999999997px;width:13px;height:12.5px"></div>
<div class="sunk" style="left:401px;top:315.84999999999997px;width:114px;height:16.0px;background:#fff"></div>
<div class="dd " style="left:501px;top:317.84999999999997px;width:13px;height:12.5px"></div>
<div class="rad" style="left:526.3px;top:318.54999999999995px"></div>
<div class="btn " style="left:256px;top:341.67999999999995px;width:12px;height:14.5px;line-height:12.5px;"><span class="" style="font-size:11px">7</span></div>
<div class="sunk" style="left:271px;top:341.67999999999995px;width:113.5px;height:16.0px;background:#fff"></div>
<div class="dd " style="left:370.5px;top:343.67999999999995px;width:13px;height:12.5px"></div>
<div class="sunk" style="left:401px;top:341.67999999999995px;width:114px;height:16.0px;background:#fff"></div>
<div class="dd " style="left:501px;top:343.67999999999995px;width:13px;height:12.5px"></div>
<div class="rad" style="left:526.3px;top:344.37999999999994px"></div>
<div class="btn " style="left:256px;top:367.51px;width:12px;height:14.5px;line-height:12.5px;"><span class="" style="font-size:11px">8</span></div>
<div class="sunk" style="left:271px;top:367.51px;width:113.5px;height:16.0px;background:#fff"></div>
<div class="dd " style="left:370.5px;top:369.51px;width:13px;height:12.5px"></div>
<div class="sunk" style="left:401px;top:367.51px;width:114px;height:16.0px;background:#fff"></div>
<div class="dd " style="left:501px;top:369.51px;width:13px;height:12.5px"></div>
<div class="rad" style="left:526.3px;top:370.21px"></div>
<div class="btn " style="left:248px;top:407.4px;width:64px;height:18.5px;line-height:16.5px;"><span class="" style="">Control Panel</span></div>
<div style="left:340.5px;top:407.4px;width:62px;height:18.5px;border:1px solid #222"></div>
<div class="btn " style="left:341.5px;top:408.4px;width:60.0px;height:16.5px;line-height:14.5px;"><span class="" style="">OK</span></div>
<div class="btn " style="left:428px;top:407.4px;width:62px;height:18.5px;line-height:16.5px;"><span class="" style="transform:scaleX(0.865)">Abbrechen</span></div>
</div></div></div></body></html>
